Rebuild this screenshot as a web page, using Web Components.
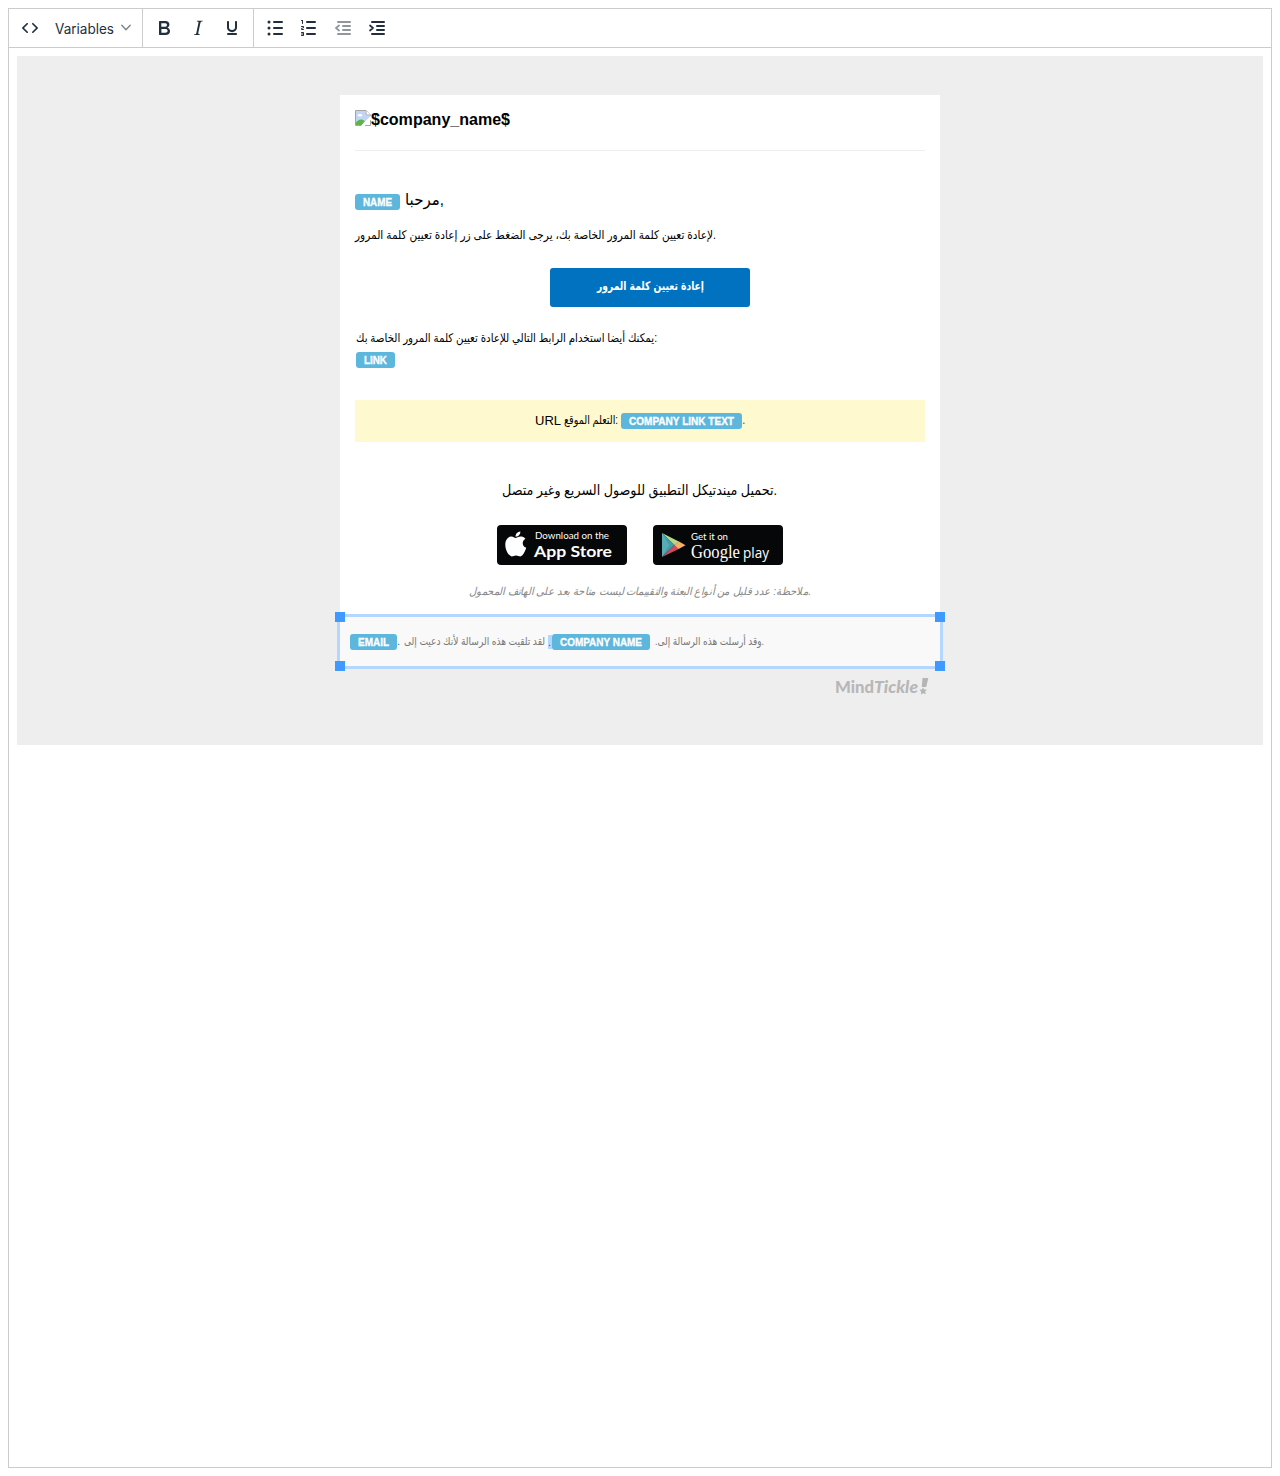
<!DOCTYPE html>
<html lang="en"><head><meta charset="utf-8"><title>Email template editor</title>
<style>body{margin:8px;background:#fff;font-family:"Liberation Sans",Arial,sans-serif;color:#000}</style></head>
<body>
<mail-editor></mail-editor>
<script>
const define=(name,html,init)=>customElements.define(name,class extends HTMLElement{
  constructor(){super();this.attachShadow({mode:'open'}).innerHTML=html}
  connectedCallback(){if(init)init(this,this.shadowRoot)}
});

// One line of text set to a given width
define('fit-text',`<style>
:host{display:block;flex:none;white-space:pre;overflow:visible}
span{display:inline-block;transform-origin:0 50%;white-space:pre}
</style><span><slot></slot></span>`,(el,root)=>{
  const w=+el.getAttribute('w'),s=root.querySelector('span');
  el.style.width=w+'px';
  const n=s.getBoundingClientRect().width;
  if(n)s.style.transform=`scaleX(${w/n})`;
});

const bars=(rows,x)=>rows.map((y,i)=>`<path d="M${x[i]} ${y}H${x.end||19}" stroke="currentColor" stroke-width="2" stroke-linecap="round"/>`).join('');
const icons={
code:'<path d="M9.8 15.7c.3.3.3.8 0 1-.3.4-.9.4-1.2 0l-4.4-4.1a.8.8 0 0 1 0-1.2l4.4-4.2c.3-.3.9-.3 1.2 0 .3.3.3.8 0 1.1L6 12l3.8 3.7zM14.2 15.7c-.3.3-.3.8 0 1 .4.4.9.4 1.2 0l4.4-4.1c.3-.3.3-.9 0-1.2l-4.4-4.2a.8.8 0 0 0-1.2 0c-.3.3-.3.8 0 1.1L18 12l-3.8 3.7z"/>',
bold:'<path fill-rule="evenodd" d="M7.8 19c-.3 0-.5 0-.6-.2l-.2-.5V5.7c0-.2 0-.4.2-.5l.6-.2h5c1.5 0 2.7.3 3.5 1 .7.6 1.1 1.4 1.1 2.5a3 3 0 0 1-.6 1.9c-.4.6-1 1-1.6 1.2.4.1.9.3 1.3.6s.8.7 1 1.2c.4.4.5 1 .5 1.6 0 1.3-.4 2.3-1.3 3-.8.7-2.1 1-3.8 1H7.8zm5-8.3c.6 0 1.2-.1 1.6-.5.4-.3.6-.7.6-1.3 0-1.1-.8-1.7-2.3-1.7H9.3v3.5h3.4zm.5 6c.7 0 1.3-.1 1.7-.4.4-.4.6-.9.6-1.5s-.2-1-.7-1.4c-.4-.3-1-.4-2-.4H9.4v3.8h4z"/>',
italic:'<path d="M16.7 4.7l-.1.9h-.3c-.6 0-1 0-1.4.3-.3.3-.4.6-.5 1.1l-2.1 9.8v.6c0 .5.4.8 1.4.8h.2l-.2.8H8l.2-.8h.2c1.1 0 1.8-.5 2-1.5l2-9.8.1-.5c0-.6-.4-.8-1.4-.8h-.3l.2-.9h5.8z"/>',
underline:'<path d="M16 5c.6 0 1 .4 1 1v5.5a4 4 0 0 1-.4 1.8l-1 1.4a5.3 5.3 0 0 1-5.5 1 5 5 0 0 1-1.6-1c-.5-.4-.8-.9-1.1-1.4a4 4 0 0 1-.4-1.8V6c0-.6.4-1 1-1s1 .4 1 1v5.5c0 .3 0 .6.2 1l.6.7a3.3 3.3 0 0 0 2.2.8 3.4 3.4 0 0 0 2.2-.8c.3-.2.4-.5.6-.8l.2-.9V6c0-.6.4-1 1-1zM8 17h8c.6 0 1 .4 1 1s-.4 1-1 1H8a1 1 0 0 1 0-2z"/>',
bullets:'<circle cx="6" cy="6" r="1.5"/><circle cx="6" cy="12" r="1.5"/><circle cx="6" cy="18" r="1.5"/>'+bars([6,12,18],[11,11,11]),
numbers:'<path d="M6 4v3.5c0 .3-.2.5-.5.5a.5.5 0 0 1-.5-.5V5h-.5a.5.5 0 0 1 0-1H6zm-1 8.8l.2.2h1.3c.3 0 .5.2.5.5s-.2.5-.5.5H4.9a1 1 0 0 1-.9-1V13c0-.4.3-.8.6-1l1.2-.4.2-.3a.2.2 0 0 0-.2-.2H4.5a.5.5 0 0 1-.5-.5c0-.3.2-.5.5-.5h1.6c.5 0 .9.4.9 1v.1c0 .4-.3.8-.6 1l-1.2.4-.2.3zM7 17v2c0 .6-.4 1-1 1H4.5a.5.5 0 0 1 0-1h1.2c.2 0 .3-.1.3-.3 0-.2-.1-.3-.3-.3H4.4a.4.4 0 1 1 0-.8h1.3c.2 0 .3-.1.3-.3 0-.2-.1-.3-.3-.3H4.5a.5.5 0 1 1 0-1H6c.6 0 1 .4 1 1z"/>'+bars([6,12,18],{0:10,1:10,2:10,end:18}),
outdent:bars([6,10,14,18],[7,12,12,7])+'<path d="M8 9.5 5 12l3 2.5" fill="none" stroke="currentColor" stroke-width="1.7" stroke-linecap="round" stroke-linejoin="round"/>',
indent:bars([6,10,14,18],[7,12,12,7])+'<path d="M5 9.5 8 12l-3 2.5" fill="none" stroke="currentColor" stroke-width="1.7" stroke-linecap="round" stroke-linejoin="round"/>'
};
define('tool-button',`<style>:host{display:flex;width:34px;height:38px;align-items:center;justify-content:center;color:#222f3e}
:host([disabled]){opacity:.5}svg{display:block;fill:currentColor}</style><svg width="24" height="24" viewBox="0 0 24 24"></svg>`,
(el,r)=>r.querySelector('svg').innerHTML=icons[el.getAttribute('icon')]);

define('tool-group',`<style>:host{display:flex;height:38px;padding:0 4px;border-right:1px solid #ccc}:host([last]){border:0}</style><slot></slot>`);
define('variables-menu',`<style>:host{display:flex;align-items:center;box-sizing:border-box;width:91px;padding-left:8px;color:#222f3e;font:14px/20px Inter,Roboto,sans-serif}
svg{margin-left:7px}fit-text{position:relative;top:1px}</style><fit-text w="59">Variables</fit-text><svg width="10" height="8" viewBox="0 0 10 8"><path d="M.8 1.3 5 5.7l4.2-4.4" fill="none" stroke="#222f3e" stroke-opacity=".6" stroke-width="1.4" stroke-linecap="round"/></svg>`);
define('editor-toolbar',`<style>:host{display:flex;height:38px;border-bottom:1px solid #ccc}</style>
<tool-group><tool-button icon="code"></tool-button><variables-menu></variables-menu></tool-group>
<tool-group><tool-button icon="bold"></tool-button><tool-button icon="italic"></tool-button><tool-button icon="underline"></tool-button></tool-group>
<tool-group last><tool-button icon="bullets"></tool-button><tool-button icon="numbers"></tool-button><tool-button icon="outdent" disabled></tool-button><tool-button icon="indent"></tool-button></tool-group>`);

define('merge-tag',`<style>:host{display:flex;flex:none;box-sizing:border-box;height:16px;padding:0 8px;border-radius:3px;background:#5db6dc;color:#fff;font:bold 10px/17px "Liberation Sans",Arial,sans-serif;-webkit-text-stroke:.3px #fff}</style><fit-text></fit-text>`,
(el,r)=>{const f=document.createElement('fit-text');f.setAttribute('w',el.getAttribute('w')-16);f.textContent=el.getAttribute('label');r.querySelector('fit-text').replaceWith(f)});

define('text-row',`<style>:host{display:flex;font-family:"Liberation Sans","DejaVu Sans",sans-serif}</style><slot></slot>`);

define('broken-image',`<style>:host{display:block;width:16px;height:16px}svg{display:block}</style><svg width="16" height="16" viewBox="0 0 16 16">
<path d="M.5 .5H11L15.5 5V15.5H.5z" fill="#fff" stroke="#a5a5a5"/><path d="M1 1H10.5V5.5H15V7L7 15H1z" fill="#c3d5f5"/><ellipse cx="5" cy="5.3" rx="2.4" ry="1.3" fill="#fff"/><path d="M1 15v-2.7c2-2.5 5-3.6 7-2.4l1.8 1.2L7 15z" fill="#5eb34a"/><path d="M16 5.5 6 16H9.5L16 9.5z" fill="#fff"/><path d="M11 .5V5h4.5" fill="#fff" stroke="#a5a5a5"/></svg>`);

define('action-button',`<style>:host{display:flex;box-sizing:border-box;width:200px;height:39px;justify-content:center;border-radius:3px;background:#0072bf;color:#fff;font:bold 12px/37px "DejaVu Sans",sans-serif}</style><slot></slot>`);

define('store-badge',`<style>:host{display:flex;box-sizing:border-box;width:130px;height:40px;background:#060708;border-radius:4px;color:#fff}
.t{display:flex;flex-direction:column}</style><slot name="icon"></slot><div class="t"><slot></slot></div>`);

define('apple-mark',`<style>:host{display:block;width:37px;height:40px}svg{display:block}</style><svg width="37" height="40" viewBox="0 0 37 40" fill="#fff"><path d="M18.8 13c2-.8 3.4-1.7 5.5-1.4 2 .2 3.2 1 4.1 2.2-3.8 2.4-3.6 7.2.8 9-1 3.6-3.4 8.3-5.8 8.6-1.7 0-2.3-1-4.4-1-2 0-2.7 1-4.2 1-3.4-.5-6.5-7-6.5-11.5 0-5.4 3-8.4 6.1-8.4 1.8 0 3.1 1.2 4.4 1.5z"/><path d="M18.6 11.7c-.2-3 2.2-5 4.7-5.2.3 2.7-1.9 5.3-4.7 5.2z"/></svg>`);
define('play-mark',`<style>:host{display:block;width:37px;height:40px}svg{display:block}</style><svg width="37" height="40" viewBox="0 0 37 40"><path d="M9 8v24l12.5-12z" fill="#429dab"/><path d="M9 8 25.8 16.4 21.5 20z" fill="#b5d889"/><path d="M9 32 25.8 24 21.5 20z" fill="#d5485c"/><path d="M25.6 16.3 32.5 20.2 25.6 24.1 21.3 20z" fill="#f8ae66"/><path d="M9 8v24l7-12z" fill="#75c5c8" opacity=".4"/></svg>`);

define('mind-logo',`<style>:host{display:flex;color:#b7b7b7;font:900 17px/20px Lato,sans-serif}i{font-style:italic}svg{display:block}</style>
<fit-text w="39">Mind</fit-text><fit-text w="44"><i>Tickle</i></fit-text><svg width="11" height="18" viewBox="0 0 11 18"><path d="M4.5 1h5.8L8.2 10H3.8z" fill="#b5b5b5"/><path d="M5 10.5l1.2 2 2.7.1-1.7 2 .6 2.6-2.6-1-2.3 1.2.3-2.6-1.8-2 2.6-.4z" fill="#b5b5b5"/></svg>`);

define('selected-row',`<style>:host{display:block;position:relative;box-sizing:border-box;width:600px;height:49px;background:#f9f9f9;outline:3px solid #b4d7ff;padding:17px 10px 0}
b{position:absolute;width:10px;height:10px;background:#4099ff}b:nth-of-type(odd){left:-5px}b:nth-of-type(even){right:-5px}b:nth-of-type(-n+2){top:-5px}b:nth-of-type(n+3){bottom:-5px}</style><slot></slot><b></b><b></b><b></b><b></b>`);

define('mail-card',`<style>
:host{display:flex;flex-direction:column;width:600px}
.main{display:flex;flex-direction:column;box-sizing:border-box;height:522px;background:#fff;padding:15px 15px 0}
text-row{flex:none}
.head{height:40px;border-bottom:1px solid #eee;font-weight:bold;font-size:16px;line-height:19px}
.hello{height:24px;margin-top:38px;font-size:16px;line-height:22px}
.hello merge-tag{margin:5px 5px 0 0}
.p{font-size:12px;line-height:16px;height:16px}
action-button{margin:25px 0 0 195px}
.url{height:42px;margin-top:32px;background:#fff9cf;padding-left:180px;font-size:12px;line-height:40px}
.get{margin-top:38px;padding-left:147px;height:20px;font-size:14px;line-height:20px}
.stores{display:flex;gap:26px;margin:25px 0 0 142px}
.note{margin-top:17px;padding-left:114px;height:18px;font-size:11px;line-height:18px;color:#888;font-style:italic}
.foot{font-size:11px;line-height:15px;color:#777}
mark{display:block;background:#b4d7ff;height:14px;width:4px;color:#555;font-size:11px;line-height:14px}
.s1{font:9.5px/12px Lato,sans-serif;margin:5px 0 0 1px}.s2{font:bold 16px/18px Lato,sans-serif}
.g1{font:9.5px/12px Lato,sans-serif;margin:6px 0 0 1px}.g2{display:flex;gap:3px;margin:-1px 0 0 1px;font:18px/20px "Liberation Serif",serif}
mind-logo{margin:11px 0 0 495px}
</style>
<div class="main">
<text-row class="head"><broken-image></broken-image><fit-text w="139">$company_name$</fit-text></text-row>
<text-row class="hello"><merge-tag w="45" label="NAME"></merge-tag><fit-text w="39">مرحبا,</fit-text></text-row>
<text-row class="p" style="margin-top:14px"><fit-text w="361">لإعادة تعيين كلمة المرور الخاصة بك، يرجى الضغط على زر إعادة تعيين كلمة المرور.</fit-text></text-row>
<action-button><fit-text w="107">إعادة تعيين كلمة المرور</fit-text></action-button>
<text-row class="p" style="margin-top:23px;padding-left:1px"><fit-text w="301">يمكنك أيضا استخدام الرابط التالي للإعادة تعيين كلمة المرور الخاصة بك:</fit-text></text-row>
<merge-tag w="39" label="LINK" style="width:39px;margin:6px 0 0 1px"></merge-tag>
<text-row class="url"><fit-text w="26" style="font-size:13px;line-height:41px">URL</fit-text><fit-text w="54" style="margin:0 3px 0 3px">التعلم الموقع:</fit-text><merge-tag w="121" label="COMPANY LINK TEXT" style="margin-top:13px"></merge-tag><span style="color:#0072bf">.</span></text-row>
<text-row class="get"><fit-text w="275">تحميل ميندتيكل التطبيق للوصول السريع وغير متصل.</fit-text></text-row>
<div class="stores"><store-badge><apple-mark slot="icon"></apple-mark><fit-text class="s1" w="74">Download on the</fit-text><fit-text class="s2" w="78">App Store</fit-text></store-badge>
<store-badge><play-mark slot="icon"></play-mark><fit-text class="g1" w="37">Get it on</fit-text><div class="g2"><fit-text w="49">Google</fit-text><fit-text w="26" style="font:15px/20px 'Open Sans',sans-serif">play</fit-text></div></store-badge></div>
<text-row class="note"><fit-text w="342">ملاحظة: عدد قليل من أنواع البعثة والتقييمات ليست متاحة بعد على الهاتف المحمول.</fit-text></text-row>
</div>
<selected-row><text-row class="foot"><merge-tag w="47" label="EMAIL"></merge-tag><span style="color:#0072bf;width:7px">.</span><fit-text w="141">لقد تلقيت هذه الرسالة لأنك دعيت إلى</fit-text><mark style="margin:1px 0 0 3px">.</mark><merge-tag w="98" label="COMPANY NAME"></merge-tag><fit-text w="109" style="margin-left:5px">.وقد أرسلت هذه الرسالة إلى.</fit-text></text-row></selected-row>
<mind-logo></mind-logo>`);

define('mail-canvas',`<style>:host{display:flex;flex-direction:column;align-items:center;box-sizing:border-box;height:689px;margin:8px;padding-top:39px;background:#eee}</style><slot></slot>`);
define('mail-editor',`<style>:host{display:block;box-sizing:border-box;width:1264px;height:1460px;border:1px solid #ccc}</style><editor-toolbar></editor-toolbar><mail-canvas><mail-card></mail-card></mail-canvas>`);
</script>
</body></html>
